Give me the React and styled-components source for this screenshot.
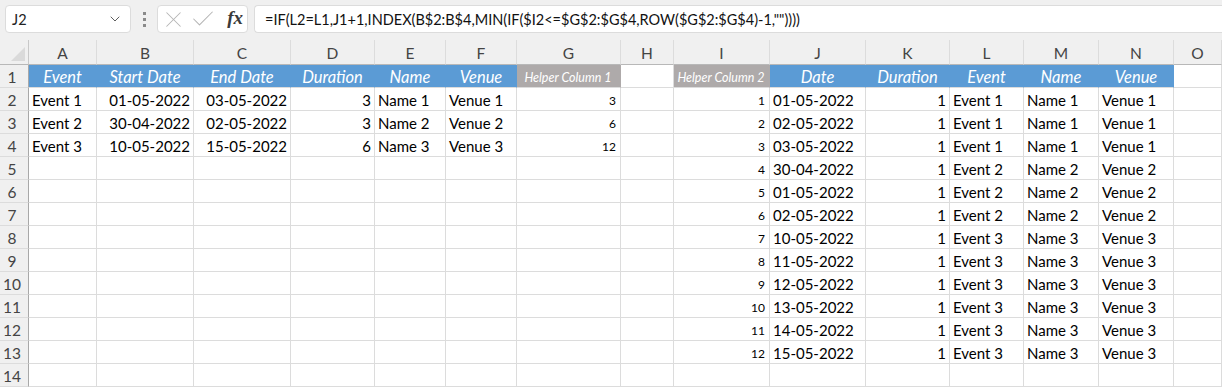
import React from 'react';
import styled, { createGlobalStyle } from 'styled-components';
import { ChevronDown, X, Check } from 'lucide-react';

const GlobalStyle = createGlobalStyle`
  body {
    margin: 0;
    background: #ffffff;
    font-family: 'Lato', 'Liberation Sans', sans-serif;
    overflow: hidden;
  }
`;

// Column widths: row header, A .. O
const WIDTHS = '29px 68px 97px 97px 84px 71px 71px 104px 53px 96px 96px 84px 74px 75px 75px 1fr';
const LETTERS = ['A', 'B', 'C', 'D', 'E', 'F', 'G', 'H', 'I', 'J', 'K', 'L', 'M', 'N', 'O'];
const ALIGN = ['left', 'right', 'right', 'right', 'left', 'left', 'right', 'left', 'right', 'left', 'right', 'left', 'left', 'left', 'left'];
const SMALL = [false, false, false, false, false, false, true, false, true, false, false, false, false, false, false];

const HEADERS = [
  { t: 'Event', f: 'blue' },
  { t: 'Start Date', f: 'blue' },
  { t: 'End Date', f: 'blue' },
  { t: 'Duration', f: 'blue' },
  { t: 'Name', f: 'blue' },
  { t: 'Venue', f: 'blue' },
  { t: 'Helper Column 1', f: 'gray' },
  { t: '', f: null },
  { t: 'Helper Column 2', f: 'gray' },
  { t: 'Date', f: 'blue' },
  { t: 'Duration', f: 'blue' },
  { t: 'Event', f: 'blue' },
  { t: 'Name', f: 'blue' },
  { t: 'Venue', f: 'blue' },
  { t: '', f: null },
];

const LEFT = [
  ['Event 1', '01-05-2022', '03-05-2022', '3', 'Name 1', 'Venue 1', '3'],
  ['Event 2', '30-04-2022', '02-05-2022', '3', 'Name 2', 'Venue 2', '6'],
  ['Event 3', '10-05-2022', '15-05-2022', '6', 'Name 3', 'Venue 3', '12'],
];

const DATES = [
  '01-05-2022', '02-05-2022', '03-05-2022', '30-04-2022', '01-05-2022', '02-05-2022',
  '10-05-2022', '11-05-2022', '12-05-2022', '13-05-2022', '14-05-2022', '15-05-2022',
];

const rows = [];
for (let i = 0; i < 13; i += 1) {
  const l = LEFT[i] || ['', '', '', '', '', '', ''];
  const ev = i < 3 ? 1 : i < 6 ? 2 : 3;
  const r = i < 12
    ? [String(i + 1), DATES[i], '1', `Event ${ev}`, `Name ${ev}`, `Venue ${ev}`]
    : ['', '', '', '', '', ''];
  rows.push([...l, '', ...r, '']);
}

const FILLS = { blue: '#5b9bd5', gray: '#aeaaaa' };

const Page = styled.div`
  width: 100%;
  height: 387px;
  background: #f0f0f0;
  overflow: hidden;
`;

const Toolbar = styled.div`
  height: 40px;
  display: flex;
  align-items: flex-start;
  padding: 5px 0 0 5px;
  box-sizing: border-box;
`;

const NameBox = styled.div`
  width: 126px;
  height: 28px;
  box-sizing: border-box;
  background: #fff;
  border: 1px solid #dcdcdc;
  border-radius: 4px;
  display: flex;
  align-items: center;
  justify-content: space-between;
  padding: 0 7px 0 6px;
  font-size: 14.5px;
  color: #222;
`;

const Dots = styled.div`
  width: 26px;
  height: 28px;
  display: flex;
  flex-direction: column;
  align-items: center;
  justify-content: center;
  gap: 3px;
  span {
    width: 3px;
    height: 3px;
    background: #8a8a8a;
  }
`;

const FxBox = styled.div`
  width: 91px;
  height: 28px;
  box-sizing: border-box;
  background: #fff;
  border: 1px solid #dcdcdc;
  border-radius: 4px;
  display: flex;
  align-items: center;
  padding: 0 4px 0 2px;
  margin-right: 6px;
`;

const Fx = styled.span`
  font-family: 'Liberation Serif', 'DejaVu Serif', serif;
  font-style: italic;
  font-weight: 700;
  font-size: 19px;
  color: #3a3a3a;
  margin-left: auto;
  padding-bottom: 2px;
`;

const FormulaBox = styled.div`
  flex: 1;
  height: 28px;
  box-sizing: border-box;
  background: #fff;
  border: 1px solid #dcdcdc;
  border-right: none;
  border-radius: 4px 0 0 4px;
  display: flex;
  align-items: center;
  padding-left: 10px;
  font-size: 14.5px;
  color: #111;
  white-space: nowrap;
`;

const Sheet = styled.div`
  display: grid;
  grid-template-columns: ${WIDTHS};
  grid-template-rows: 25px;
  grid-auto-rows: 23px;
  background: #fff;
`;

const Corner = styled.div`
  box-sizing: border-box;
  background: #f0f0f0;
  border-right: 1px solid #c8c8c8;
  border-bottom: 1px solid #b8b8b8;
  position: relative;
  &::after {
    content: '';
    position: absolute;
    right: 3px;
    bottom: 3px;
    border-style: solid;
    border-width: 0 0 14px 14px;
    border-color: transparent transparent #dadada transparent;
  }
`;

const ColHead = styled.div`
  box-sizing: border-box;
  background: #f0f0f0;
  border-right: 1px solid #dcdcdc;
  border-bottom: 1px solid #b8b8b8;
  display: flex;
  align-items: center;
  justify-content: center;
  padding-top: 2px;
  font-size: 15.5px;
  color: #444;
`;

const RowHead = styled.div`
  box-sizing: border-box;
  background: #f0f0f0;
  border-right: 1px solid #a8a8a8;
  border-bottom: 1px solid #dcdcdc;
  display: flex;
  align-items: center;
  justify-content: center;
  padding: 1px 4px 0 0;
  font-size: 15.5px;
  color: #444;
`;

const Cell = styled.div`
  box-sizing: border-box;
  border-right: 1px solid ${(p) => (p.$fill ? FILLS[p.$fill] : '#dcdcdc')};
  border-bottom: 1px solid #dcdcdc;
  background: ${(p) => (p.$fill ? FILLS[p.$fill] : '#fff')};
  display: flex;
  align-items: center;
  justify-content: ${(p) => (p.$align === 'right' ? 'flex-end' : p.$align === 'center' ? 'center' : 'flex-start')};
  padding: ${(p) => (p.$small ? '3px 4px 0 3px' : '1px 3px 0 3px')};
  font-size: ${(p) => (p.$small ? '12px' : '15px')};
  color: #000;
  white-space: nowrap;
  overflow: hidden;
`;

const HeadCell = styled(Cell)`
  font-style: italic;
  font-size: ${(p) => (p.$small ? '12.5px' : '16.5px')};
  padding-top: ${(p) => (p.$small ? '3px' : '2px')};
  color: #fff;
`;

function App() {
  return (
    <Page>
      <GlobalStyle />
      <Toolbar>
        <NameBox>
          <span>J2</span>
          <ChevronDown size={16} strokeWidth={1.3} color="#444" />
        </NameBox>
        <Dots>
          <span />
          <span />
          <span />
        </Dots>
        <FxBox>
          <X size={27} strokeWidth={0.9} color="#b4b4b4" />
          <Check size={28} strokeWidth={0.9} color="#b4b4b4" style={{ marginLeft: 2 }} />
          <Fx>fx</Fx>
        </FxBox>
        <FormulaBox>=IF(L2=L1,J1+1,INDEX(B$2:B$4,MIN(IF($I2&lt;=$G$2:$G$4,ROW($G$2:$G$4)-1,&quot;&quot;))))</FormulaBox>
      </Toolbar>
      <Sheet>
        <Corner />
        {LETTERS.map((l) => (
          <ColHead key={l}>{l}</ColHead>
        ))}
        <RowHead>1</RowHead>
        {HEADERS.map((h, c) => (
          <HeadCell key={`h${c}`} $fill={h.f} $align="center" $small={h.f === 'gray'}>
            {h.t}
          </HeadCell>
        ))}
        {rows.map((row, r) => (
          <React.Fragment key={r}>
            <RowHead>{r + 2}</RowHead>
            {row.map((v, c) => (
              <Cell key={c} $align={ALIGN[c]} $small={SMALL[c]}>
                {v}
              </Cell>
            ))}
          </React.Fragment>
        ))}
      </Sheet>
    </Page>
  );
}

export default App;
